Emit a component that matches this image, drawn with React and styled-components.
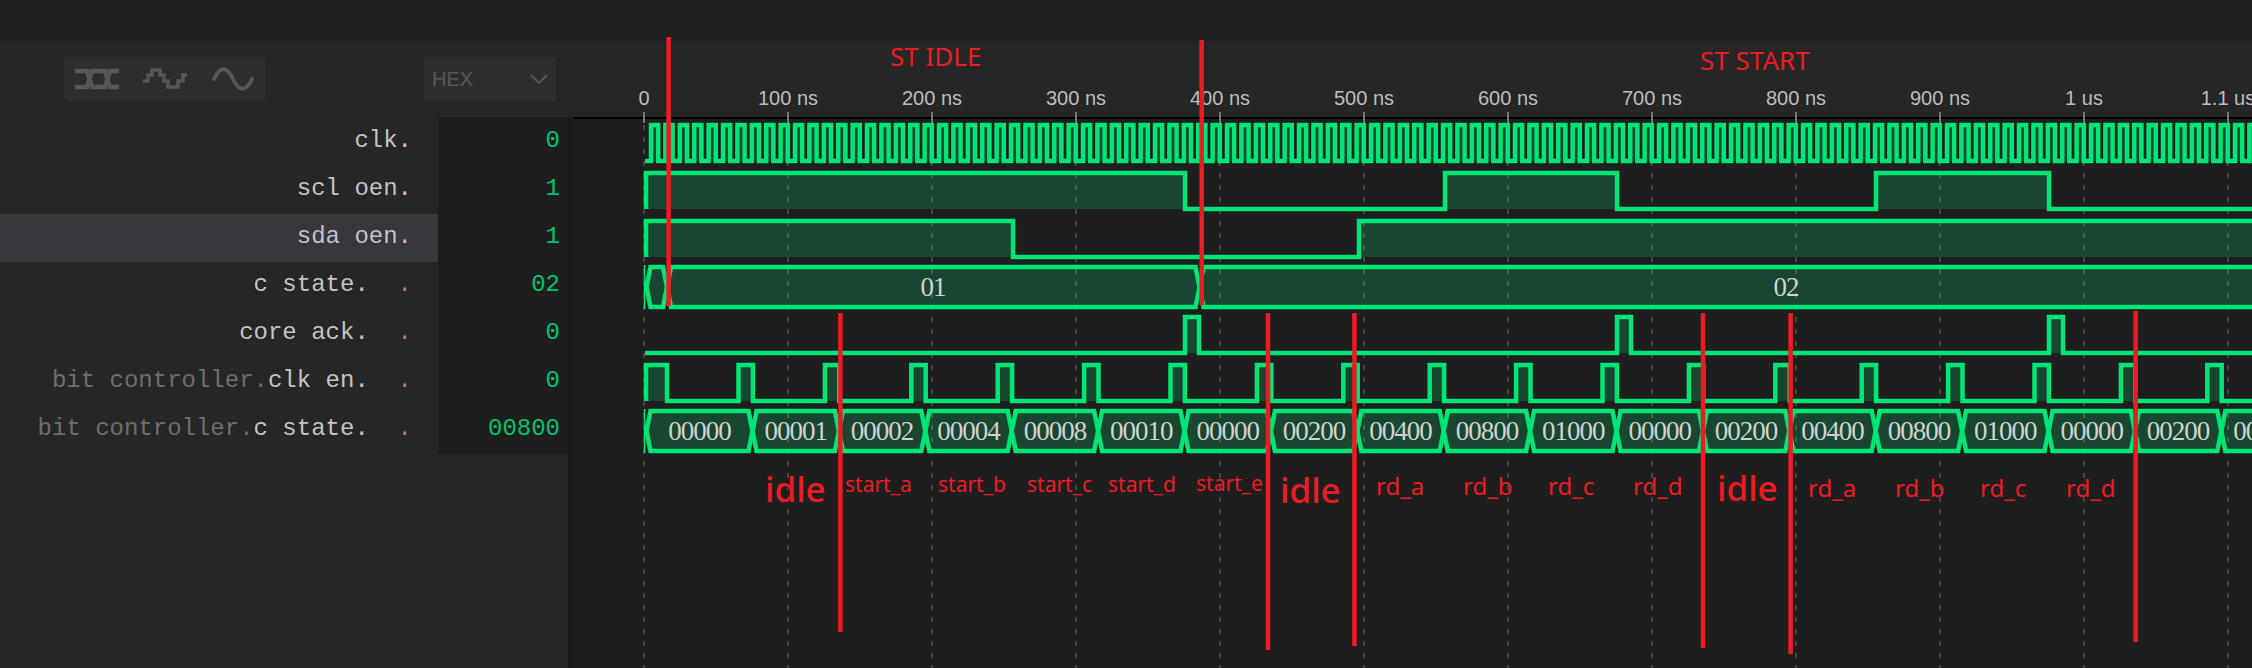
import React from "react";
import styled, { createGlobalStyle } from "styled-components";

const GlobalStyle = createGlobalStyle`
	html, body {
		margin: 0;
		height: 100%;
		overflow: hidden;
		background-color: #1e1e1e;
	}
`;

const Page = styled.div`
	display: flex;
	flex-direction: column;
	height: 100vh;
`;

const TopBar = styled.div`
	height: 41px;
	flex-shrink: 0;
	background-color: #1f1f1f;
`;

const Main = styled.div`
	display: flex;
	flex: 1;
	min-height: 0;
`;

const Sidebar = styled.div`
	width: 568px;
	flex-shrink: 0;
	display: flex;
	flex-direction: column;
	background-color: #262626;
`;

const Toolbar = styled.div`
	height: 76px;
	box-sizing: border-box;
	padding: 16px 12px 0 64px;
	display: flex;
	justify-content: space-between;
	align-items: flex-start;
`;

const ModeGroup = styled.div`
	width: 202px;
	height: 44px;
	border-radius: 4px;
	background-color: #2d2d2d;
`;

const ModeIcons = styled.svg`
	display: block;
	fill: none;
	stroke: #575757;
`;

const RadixSelect = styled.div`
	width: 132px;
	height: 44px;
	box-sizing: border-box;
	padding: 0 8px;
	display: flex;
	align-items: center;
	justify-content: space-between;
	background-color: #2d2d2d;
	color: #575757;
	font-family: "Liberation Sans", sans-serif;
	font-size: 20px;
`;

const SignalTable = styled.div`
	display: flex;
	flex-direction: column;
	padding-top: 1px;
	background: linear-gradient(to right, #262626 438px, #1e1e1e 438px);
`;

const Row = styled.div`
	display: grid;
	grid-template-columns: 438px 130px;
	height: 48px;
	font-family: "Liberation Mono", monospace;
	font-size: 24px;
	line-height: 46px;
	white-space: pre;
`;

const Name = styled.div`
	padding-right: 26px;
	text-align: right;
	color: #c4c4c4;
	background-color: ${(p) => (p.$active ? "#37373d" : "transparent")};
`;

const Scope = styled.span`
	color: #6e6e6e;
`;

const Trail = styled.span`
	color: #8c8c8c;
`;

const Value = styled.div`
	padding-right: 8px;
	text-align: right;
	color: #00c46c;
`;

const Canvas = styled.div`
	flex: 1;
	position: relative;
	display: flex;
	flex-direction: column;
	min-width: 0;
`;

const Ruler = styled.div`
	height: 76px;
	flex-shrink: 0;
	background-color: #262626;
`;

const WaveArea = styled.div`
	flex: 1;
	background: linear-gradient(to right, #191919, #1e1e1e 8px);
`;

const WaveSvg = styled.svg`
	position: absolute;
	left: 0;
	top: 0;
	overflow: visible;
`;

const AxisLine = styled.line`
	stroke: #000;
	stroke-width: 2;
`;

const TickMark = styled.line`
	stroke: #777;
	stroke-width: 2;
`;

const GridLine = styled.line`
	stroke: #454545;
	stroke-width: 2;
	stroke-dasharray: 5 7;
`;

const TickLabel = styled.text`
	fill: #bdbdbd;
	font-family: "Liberation Sans", sans-serif;
	font-size: 20px;
	text-anchor: middle;
`;

const Fill = styled.path`
	fill: #00e676;
	fill-opacity: 0.2;
`;

const Trace = styled.path`
	fill: none;
	stroke: #00e676;
	stroke-width: 4.5;
	stroke-linejoin: miter;
`;

const BusStart = styled.line`
	stroke: #00e676;
	stroke-width: 1.5;
`;

const BusLabel = styled.text`
	fill: #d2d2d2;
	font-family: "Liberation Serif", serif;
	font-size: 27px;
	letter-spacing: -1px;
	text-anchor: middle;
`;

const Marker = styled.line`
	stroke: #ed1c24;
	stroke-width: 4.5;
`;

const Note = styled.text`
	fill: #ed1c24;
	font-family: "Noto Sans", sans-serif;
	font-size: ${(p) => p.$size}px;
	font-weight: ${(p) => (p.$size > 30 ? 500 : 400)};
`;

const PERIOD = 14.4;
const WIDTH = 1684;
const HEIGHT = 627;
const RIGHT = 2260;

const rowTop = (i) => 125 + 48 * i;
const rowLow = (i) => rowTop(i) + 36;

const signals = [
	{ name: "clk.", value: "0" },
	{ name: "scl oen.", value: "1" },
	{ name: "sda oen.", value: "1", active: true },
	{ name: "c state.  ", trail: ".", value: "02" },
	{ name: "core ack.  ", trail: ".", value: "0" },
	{ scope: "bit controller.", name: "clk en.  ", trail: ".", value: "0" },
	{ scope: "bit controller.", name: "c state.  ", trail: ".", value: "00800" },
];

const ticks = ["0", "100 ns", "200 ns", "300 ns", "400 ns", "500 ns", "600 ns", "700 ns", "800 ns", "900 ns", "1 us", "1.1 us"];

// list of [rise, fall] spans, turned into a step trace + the filled part under the high level
function stepPaths(row, spans, start) {
	const hi = rowTop(row);
	const lo = rowLow(row);
	let line = `M${start} ${lo}`;
	let fill = "";
	spans.forEach(([a, b]) => {
		line += ` H${a} V${hi} H${b} V${lo}`;
		fill += ` M${a} ${lo} V${hi} H${b} V${lo} Z`;
	});
	line += ` H${RIGHT}`;
	return { line, fill };
}

function Step({ row, spans, start = 646 }) {
	const { line, fill } = stepPaths(row, spans, start);
	return (
		<>
			<Fill d={fill} />
			<Trace d={line} />
		</>
	);
}

const clockSpans = [];
for (let k = 0; k < 112; k++) clockSpans.push([651 + PERIOD * k, 658.2 + PERIOD * k]);

const enableSpans = [[646, 667]];
for (let k = 0; k < 18; k++) enableSpans.push([738.5 + 86.4 * k, 752.9 + 86.4 * k]);

function Hexagon({ row, from, to, slant = 4 }) {
	const top = rowTop(row) - 2;
	const bottom = top + 40;
	const mid = top + 20;
	const d = `M${from} ${mid} L${from + slant} ${top} H${to - slant} L${to} ${mid} L${to - slant} ${bottom} H${from + slant} Z`;
	return (
		<>
			<Fill d={d} />
			<Trace d={d} />
		</>
	);
}

const bitStates = ["00000", "00001", "00002", "00004", "00008", "00010", "00000", "00200", "00400", "00800", "01000", "00000", "00200", "00400", "00800", "01000", "00000", "00200", "00400"];

const markers = [
	[668.6, 37, 306],
	[1201.7, 40, 305],
	[840.4, 313, 632],
	[1268, 313, 650],
	[1354.4, 313, 646],
	[1703, 313, 648],
	[1790.6, 313, 654],
	[2135.6, 311, 642],
];

const notes = [
	["ST IDLE", 890, 66, 26],
	["ST START", 1700, 70, 26],
	["idle", 765, 502, 35],
	["idle", 1280, 503, 35],
	["idle", 1717, 501, 35],
	["start_a", 845, 492, 21],
	["start_b", 938, 492, 21],
	["start_c", 1027, 492, 21],
	["start_d", 1108, 492, 21],
	["start_e", 1196, 491, 21],
	["rd_a", 1376, 495, 24],
	["rd_b", 1463, 495, 24],
	["rd_c", 1548, 495, 24],
	["rd_d", 1633, 495, 24],
	["rd_a", 1808, 497, 24],
	["rd_b", 1895, 497, 24],
	["rd_c", 1980, 497, 24],
	["rd_d", 2066, 497, 24],
];

function Waves() {
	return (
		<WaveSvg width={WIDTH} height={HEIGHT} viewBox={`568 41 ${WIDTH} ${HEIGHT}`}>
			<AxisLine x1="574" y1="118" x2={RIGHT} y2="118" />
			{ticks.map((label, i) => {
				const x = 644 + 144 * i;
				return (
					<g key={label}>
						<TickLabel x={x} y="105">
							{label}
						</TickLabel>
						<TickMark x1={x} y1="112" x2={x} y2="123" />
						<GridLine x1={x} y1="125" x2={x} y2="668" />
					</g>
				);
			})}
			<Step row={0} spans={clockSpans} start={645} />
			<Step
				row={1}
				spans={[
					[646, 1185],
					[1445, 1617],
					[1876, 2049],
				]}
			/>
			<Step
				row={2}
				spans={[
					[646, 1013],
					[1359, RIGHT],
				]}
			/>
			<BusStart x1="644.5" y1="265" x2="644.5" y2="309" />
			<Hexagon row={3} from={646.5} to={667} slant={4} />
			<Hexagon row={3} from={667} to={1199.5} />
			<Hexagon row={3} from={1199.5} to={RIGHT} />
			<BusLabel x="933" y="296">
				01
			</BusLabel>
			<BusLabel x="1786" y="296">
				02
			</BusLabel>
			<Step
				row={4}
				start={645}
				spans={[
					[1185, 1199],
					[1617, 1631],
					[2049, 2063],
				]}
			/>
			<Step row={5} spans={enableSpans} />
			<BusStart x1="644.5" y1="409" x2="644.5" y2="453" />
			{bitStates.map((state, i) => {
				const from = i === 0 ? 646.5 : 666.1 + 86.4 * i;
				const to = 752.5 + 86.4 * i;
				return (
					<g key={i}>
						<Hexagon row={6} from={from} to={to} />
						<BusLabel x={(from + to) / 2} y="440">
							{state}
						</BusLabel>
					</g>
				);
			})}
			{markers.map(([x, y1, y2]) => (
				<Marker key={x} x1={x} y1={y1} x2={x} y2={y2} />
			))}
			{notes.map(([text, x, y, size], i) => (
				<Note key={i} x={x} y={y} $size={size}>
					{text}
				</Note>
			))}
		</WaveSvg>
	);
}

export default function App() {
	return (
		<Page>
			<GlobalStyle />
			<TopBar />
			<Main>
				<Sidebar>
					<Toolbar>
						<ModeGroup>
							<ModeIcons width="202" height="44" viewBox="64 57 202 44">
								<path strokeWidth="4.5" d="M75 71 H87 L92 87 H105 L110 71 H119 M75 87 H87 L92 71 H105 L110 87 H119" />
								<path strokeWidth="3.5" d="M143 81 H148 V75 H152 V70 H160 V75 H164 V81 H168 V87 H178 V81 H183 V75 H187" />
								<path strokeWidth="4" d="M214 79 C220 66 227 66 233 79 C239 92 246 92 252 79" strokeLinecap="round" />
							</ModeIcons>
						</ModeGroup>
						<RadixSelect>
							HEX
							<svg width="18" height="10" viewBox="0 0 18 10" fill="none" stroke="#575757" strokeWidth="2">
								<path d="M1 1 L9 9 L17 1" />
							</svg>
						</RadixSelect>
					</Toolbar>
					<SignalTable>
						{signals.map((s) => (
							<Row key={(s.scope || "") + s.name}>
								<Name $active={s.active}>
									{s.scope && <Scope>{s.scope}</Scope>}
									{s.name}
									{s.trail && <Trail>{s.trail}</Trail>}
								</Name>
								<Value>{s.value}</Value>
							</Row>
						))}
					</SignalTable>
				</Sidebar>
				<Canvas>
					<Ruler />
					<WaveArea />
					<Waves />
				</Canvas>
			</Main>
		</Page>
	);
}
